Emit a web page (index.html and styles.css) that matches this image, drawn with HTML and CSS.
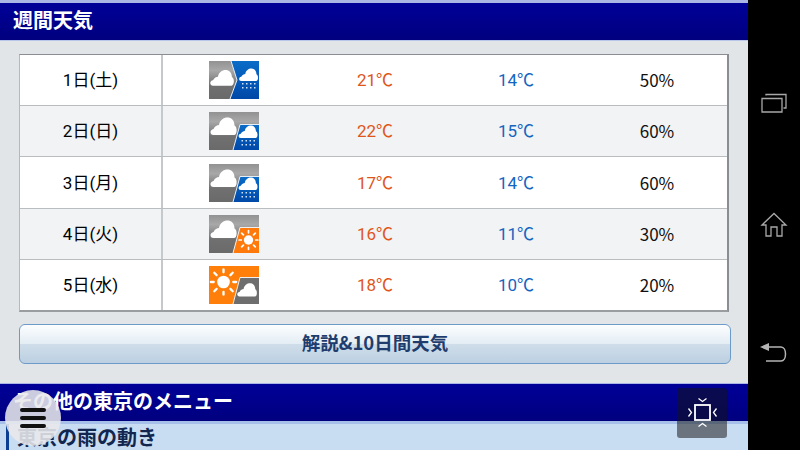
FILE: index.html
```html
<!DOCTYPE html>
<html lang="ja">
<head>
    <meta charset="UTF-8">
    <title>週間天気</title>
    <link rel="stylesheet" href="styles.css">
</head>
<body>
    <svg class="defs" width="0" height="0">
        <defs>
            <linearGradient id="grayBg" x1="0" y1="0" x2="0" y2="1">
                <stop offset="0" stop-color="#929292"/>
                <stop offset="0.25" stop-color="#a8a8a8"/>
                <stop offset="0.65" stop-color="#707070"/>
                <stop offset="1" stop-color="#6a6a6a"/>
            </linearGradient>
            <linearGradient id="blueBg" x1="0" y1="0" x2="0" y2="1">
                <stop offset="0" stop-color="#0a6cc8"/>
                <stop offset="1" stop-color="#0048a8"/>
            </linearGradient>
            <path id="cloud" d="M-10 8.500C-14 8.500 -14 3 -10 2.500C-8.500 -0.500 -6.500 -1.500 -4.500 -1.500C-3 -11 11 -12 11 -1C14 0 14 8.500 10.500 8.500Z"/>
            <g id="sun">
                <circle r="5.500" fill="#fff"/>
                <path d="M0 -8.500V-11M0 8.500V11M-8.500 0H-11M8.500 0H11M-6 -6L-8 -8M6 -6L8 -8M-6 6L-8 8M6 6L8 8" stroke="#fff" stroke-width="2" stroke-linecap="round"/>
            </g>
            <g id="rain">
                <use href="#cloud" fill="#fff" transform="scale(0.72)"/>
                <path d="M-6.500 8h1.500v1.500h-1.500zM-2.500 8h1.500v1.500h-1.500zM1.500 8h1.500v1.500h-1.500zM5.500 8h1.500v1.500h-1.500zM-6.500 12h1.500v1.500h-1.500zM-2.500 12h1.500v1.500h-1.500zM1.500 12h1.500v1.500h-1.500zM5.500 12h1.500v1.500h-1.500z" fill="#cfe2f6"/>
            </g>
            <g id="later">
                <rect width="50" height="38" fill="url(#grayBg)"/>
                <use href="#cloud" fill="#fff" transform="translate(14.500 14.500)"/>
            </g>
        </defs>
    </svg>

    <div class="main">
        <h2 class="head">週間天気</h2>

        <div class="content">
            <div class="week">
                <div class="row">
                    <div class="date">1日(土)</div>
                    <div class="pic">
                        <svg class="wx" viewBox="0 0 50 38">
                            <rect width="50" height="38" fill="url(#grayBg)"/>
                            <use href="#cloud" fill="#fff" transform="translate(13 17) scale(0.9)"/>
                            <path d="M22 0H50V38H21L28 19Z" fill="url(#blueBg)"/>
                            <path d="M22 0L28 19L21 38" fill="none" stroke="#e6eef6"/>
                            <use href="#rain" transform="translate(39.500 14)"/>
                        </svg>
                    </div>
                    <div class="hi">21℃</div>
                    <div class="lo">14℃</div>
                    <div class="pct">50%</div>
                </div>
                <div class="row even">
                    <div class="date">2日(日)</div>
                    <div class="pic">
                        <svg class="wx" viewBox="0 0 50 38">
                            <use href="#later"/>
                            <path d="M31 12.500H50V38H24Z" fill="url(#blueBg)"/>
                            <path d="M50 12.500H31L24 38" fill="none" stroke="#e6eef6"/>
                            <use href="#rain" transform="translate(39 20)"/>
                        </svg>
                    </div>
                    <div class="hi">22℃</div>
                    <div class="lo">15℃</div>
                    <div class="pct">60%</div>
                </div>
                <div class="row">
                    <div class="date">3日(月)</div>
                    <div class="pic">
                        <svg class="wx" viewBox="0 0 50 38">
                            <use href="#later"/>
                            <path d="M31 12.500H50V38H24Z" fill="url(#blueBg)"/>
                            <path d="M50 12.500H31L24 38" fill="none" stroke="#e6eef6"/>
                            <use href="#rain" transform="translate(39 20)"/>
                        </svg>
                    </div>
                    <div class="hi">17℃</div>
                    <div class="lo">14℃</div>
                    <div class="pct">60%</div>
                </div>
                <div class="row even">
                    <div class="date">4日(火)</div>
                    <div class="pic">
                        <svg class="wx" viewBox="0 0 50 38">
                            <use href="#later"/>
                            <path d="M31 12.500H50V38H24Z" fill="#ff7a0a"/>
                            <path d="M50 12.500H31L24 38" fill="none" stroke="#f0f0f0"/>
                            <use href="#sun" transform="translate(39.500 25) scale(0.85)"/>
                        </svg>
                    </div>
                    <div class="hi">16℃</div>
                    <div class="lo">11℃</div>
                    <div class="pct">30%</div>
                </div>
                <div class="row">
                    <div class="date">5日(水)</div>
                    <div class="pic">
                        <svg class="wx" viewBox="0 0 50 38">
                            <rect width="50" height="38" fill="#ff7f0a"/>
                            <use href="#sun" transform="translate(14.500 16) scale(1.15)"/>
                            <path d="M31 11.500H50V38H24Z" fill="#6e6e6e"/>
                            <path d="M50 11.500H31L24 38" fill="none" stroke="#f0f0f0"/>
                            <use href="#cloud" fill="#fff" transform="translate(38 24) scale(0.75)"/>
                        </svg>
                    </div>
                    <div class="hi">18℃</div>
                    <div class="lo">10℃</div>
                    <div class="pct">20%</div>
                </div>
            </div>

            <a class="btn">解説&amp;10日間天気</a>
        </div>

        <h2 class="head head-menu">その他の東京のメニュー</h2>
        <div class="sub"><span class="sub-text">東京の雨の動き</span></div>

        <div class="menu-btn">
            <span></span><span></span><span></span>
        </div>
        <div class="fit-btn">
            <svg width="50" height="50" viewBox="0 0 50 50" fill="none" stroke="#fff" stroke-width="1.300">
                <rect x="18" y="17" width="15" height="15" stroke-width="1.800"/>
                <path d="M21.500 10.500l4 3 4-3M21.500 38.500l4-3 4 3M11.500 20.500l3 4-3 4M39.500 20.500l-3 4 3 4"/>
            </svg>
        </div>
    </div>

    <div class="nav">
        <svg width="28" height="22" viewBox="0 0 28 22" fill="none" stroke="#a8a8a8" stroke-width="1.300">
            <path d="M2 6.500H22V20H2ZM6 3.500V2.500H26V16H23.500"/>
        </svg>
        <svg width="28" height="26" viewBox="0 0 28 26" fill="none" stroke="#a8a8a8" stroke-width="1.300">
            <path d="M2 13L14 1.500L26 13L22 13V24H17V15H11V24H6V13Z"/>
        </svg>
        <svg class="back" width="30" height="22" viewBox="0 0 30 22" fill="none" stroke="#b4b4b4" stroke-width="1.500">
            <path d="M9 5H22C28 5 28 19 22 19H7"/>
            <path d="M1 5L10 1V9Z" fill="#b4b4b4" stroke="none"/>
        </svg>
    </div>
</body>
</html>
```

FILE: styles.css
```css
html, body {
    margin: 0;
    height: 450px;
    overflow: hidden;
}
body {
    display: flex;
    font-family: "Noto Sans CJK JP", "Liberation Sans", sans-serif;
    background-color: #000;
}
.defs {
    position: absolute;
}
.main {
    position: relative;
    width: 748px;
    height: 450px;
    overflow: hidden;
    background-color: #e2e5e7;
}
.nav {
    width: 52px;
    padding-top: 92px;
    display: flex;
    flex-direction: column;
    align-items: center;
    gap: 98px;
    box-sizing: border-box;
    background-color: #000;
}
.back {
    margin-top: 6px;
}
.head {
    margin: 0;
    height: 37px;
    padding-left: 13px;
    border-top: 3px solid #a9b6e6;
    border-bottom: 1px solid #b9c6ea;
    background: linear-gradient(#000098, #00007f);
    color: #fff;
    font-size: 20px;
    font-weight: bold;
    line-height: 34px;
    white-space: nowrap;
}
.head-menu {
    border-top-width: 1px;
    border-bottom: 3px solid #a6c0ea;
}
.content {
    height: 342px;
    padding: 13px 17px 0 19px;
    box-sizing: border-box;
}
.week {
    display: flex;
    flex-direction: column;
    width: 710px;
    height: 258px;
    box-sizing: border-box;
    border: 1px solid #8a8e92;
    border-left-color: #b5b9bc;
    border-bottom: 2px solid #9a9da0;
    border-right-width: 2px;
}
.row {
    flex: 1;
    display: grid;
    grid-template-columns: 143px 142px 140px 142px 1fr;
    align-items: center;
    justify-items: center;
    background-color: #fff;
    border-bottom: 1px solid #b9bdc0;
    font-size: 17px;
    line-height: 24px;
}
.row:last-child {
    border-bottom: 0;
}
.row.even {
    background-color: #f1f3f4;
}
.date {
    display: flex;
    align-items: center;
    justify-content: center;
    align-self: stretch;
    width: 100%;
    border-right: 2px solid #c5c9cb;
    box-sizing: border-box;
    font-family: Roboto, "Noto Sans CJK JP", sans-serif;
}
.pic {
    height: 38px;
}
.wx {
    display: block;
    width: 50px;
    height: 38px;
}
.hi, .lo {
    font-family: Roboto, "Noto Sans CJK JP", sans-serif;
}
.hi {
    color: #e0561a;
}
.lo {
    color: #1565c0;
}
.pct {
    color: #111;
}
.btn {
    display: block;
    width: 712px;
    height: 40px;
    margin-top: 12px;
    box-sizing: border-box;
    border: 1px solid #6d9bc9;
    border-radius: 6px;
    background: linear-gradient(#fcfdfe 0%, #e3edf4 50%, #cfdde9 51%, #bcd0e2 100%);
    color: #1e3d6e;
    font-size: 18.500px;
    font-weight: bold;
    line-height: 35px;
    text-align: center;
}
.sub {
    height: 26px;
    padding-left: 6px;
    background-color: #c8dcf2;
}
.sub-text {
    display: block;
    border-left: 3px solid #0a3f92;
    padding-left: 8px;
    color: #12264f;
    font-size: 20px;
    font-weight: bold;
    line-height: 26px;
    white-space: nowrap;
}
.menu-btn {
    position: absolute;
    left: 5px;
    top: 390px;
    width: 56px;
    height: 56px;
    box-sizing: border-box;
    padding-top: 18px;
    border-radius: 50%;
    background-color: rgba(232, 232, 236, 0.88);
}
.menu-btn span {
    display: block;
    width: 26px;
    height: 3.500px;
    margin: 0 auto 4.500px;
    border-radius: 2px;
    background-color: #111;
}
.fit-btn {
    position: absolute;
    left: 677px;
    top: 388px;
    width: 50px;
    height: 50px;
    border-radius: 3px;
    background-color: rgba(20, 20, 20, 0.52);
}
.fit-btn svg {
    display: block;
}
```
